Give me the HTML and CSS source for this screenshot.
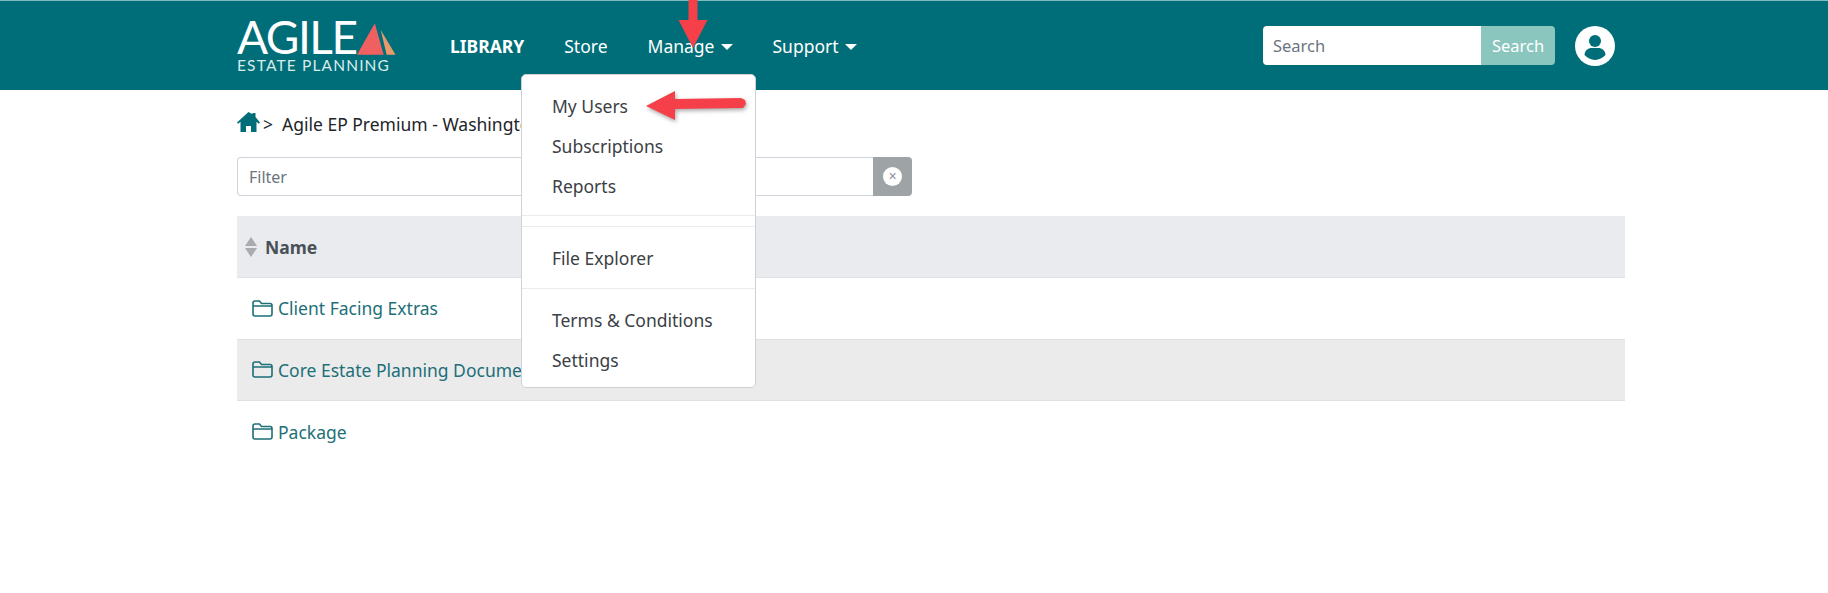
FILE: index.html
```html
<!DOCTYPE html>
<html lang="en">
<head>
    <meta charset="UTF-8">
    <meta name="viewport" content="width=device-width, initial-scale=1.0">
    <title>Agile Estate Planning - Library</title>
    <link rel="stylesheet" href="styles.css">
</head>
<body>
    <header class="navbar">
        <a class="brand">
            <span class="brand-top">
                <span class="brand-name">AGILE</span>
                <svg class="brand-sail" width="40" height="34" viewBox="0 0 40 34">
                    <polygon points="18,1 0,33 27,33" fill="#f06060"/>
                    <polygon points="24,8 39,33 30,33" fill="#e89a6a"/>
                </svg>
            </span>
            <span class="brand-sub">ESTATE PLANNING</span>
        </a>
        <nav class="nav-links">
            <a class="nav-link active">LIBRARY</a>
            <a class="nav-link store">Store</a>
            <a class="nav-link manage">Manage<span class="caret"></span></a>
            <a class="nav-link">Support<span class="caret"></span></a>
        </nav>
        <form class="search">
            <input class="search-input" type="text" placeholder="Search">
            <button class="search-btn" type="button">Search</button>
        </form>
        <svg class="avatar" width="40" height="40" viewBox="0 0 40 40">
            <circle cx="20" cy="20" r="20" fill="#fff"/>
            <circle cx="20" cy="15" r="6" fill="#006e78"/>
            <path d="M9.500 29c0-4.500 4-7 7-7h7c3 0 7 2.500 7 7-2.800 2.800-6.500 5-10.500 5s-7.700-2.200-10.500-5z" fill="#006e78"/>
        </svg>
    </header>

    <div class="dropdown">
        <a class="dropdown-item first">My Users</a>
        <a class="dropdown-item">Subscriptions</a>
        <a class="dropdown-item">Reports</a>
        <div class="divider double"></div>
        <a class="dropdown-item">File Explorer</a>
        <div class="divider"></div>
        <a class="dropdown-item">Terms &amp; Conditions</a>
        <a class="dropdown-item">Settings</a>
    </div>

    <!-- annotation arrows drawn over the screenshot -->
    <svg class="arrow arrow-down" width="30" height="50" viewBox="0 0 30 50">
        <rect x="10.500" y="0" width="9" height="24" fill="#f5404a"/>
        <polygon points="0.500,20 29.500,20 15,48" fill="#f5404a"/>
    </svg>
    <svg class="arrow arrow-left" width="104" height="34" viewBox="0 0 104 34">
        <polygon points="1,17 30,2 30,10 96,9 100,11 101,15 98,19 30,20 30,31" fill="#f5404a"/>
    </svg>

    <main class="content">
        <div class="breadcrumb">
            <svg class="home-icon" width="23" height="20" viewBox="0 0 23 20">
                <path d="M11.500 0L0 10.500l1.200 1.300L3.500 9.800V20h5.500v-6h5v6h5.500V9.800l2.300 2 1.200-1.300L18.500 5V1h-3v1.300z" fill="#006e78"/>
            </svg>
            <span class="crumb-sep">&gt;</span>
            <span class="crumb-text">Agile EP Premium - Washington</span>
        </div>

        <div class="filter">
            <input class="filter-input" type="text" placeholder="Filter">
            <button class="filter-clear" type="button"><span class="clear-dot">×</span></button>
        </div>

        <div class="table">
            <div class="table-head">
                <span class="sort-icon">
                    <span class="sort-up"></span>
                    <span class="sort-down"></span>
                </span>
                Name
            </div>
            <div class="table-row">
                <svg class="folder" width="21" height="17" viewBox="0 0 21 17"><path d="M1 14V3c0-1 .8-2 2-2h4.500l2 2.500H18c1.200 0 2 1 2 2V14c0 1-.8 2-2 2H3c-1.200 0-2-1-2-2zM1 6h19" fill="none" stroke="#1d6f78" stroke-width="1.600"/></svg>
                <a class="row-link">Client Facing Extras</a>
            </div>
            <div class="table-row striped">
                <svg class="folder" width="21" height="17" viewBox="0 0 21 17"><path d="M1 14V3c0-1 .8-2 2-2h4.500l2 2.500H18c1.200 0 2 1 2 2V14c0 1-.8 2-2 2H3c-1.200 0-2-1-2-2zM1 6h19" fill="none" stroke="#1d6f78" stroke-width="1.600"/></svg>
                <a class="row-link">Core Estate Planning Documents</a>
            </div>
            <div class="table-row">
                <svg class="folder" width="21" height="17" viewBox="0 0 21 17"><path d="M1 14V3c0-1 .8-2 2-2h4.500l2 2.500H18c1.200 0 2 1 2 2V14c0 1-.8 2-2 2H3c-1.200 0-2-1-2-2zM1 6h19" fill="none" stroke="#1d6f78" stroke-width="1.600"/></svg>
                <a class="row-link">Package</a>
            </div>
        </div>
    </main>
</body>
</html>
```

FILE: styles.css
```css
:root {
    --teal: #006e78;
    --text-color: #343a40;
    --link-color: #1d6f78;
}

* {
    margin: 0;
    padding: 0;
    box-sizing: border-box;
}

body {
    font-family: "Noto Sans", "Open Sans", sans-serif;
    font-size: 17px;
    color: var(--text-color);
    background-color: #fff;
    min-height: 593px;
    overflow: hidden;
}

.navbar {
    display: flex;
    align-items: center;
    height: 90px;
    padding: 0 213px 0 237px;
    background-color: var(--teal);
    border-top: 1px solid #7fbcc0;
    color: #fff;
}

.brand {
    display: flex;
    flex-direction: column;
    width: 160px;
    color: #fff;
}

.brand-top {
    display: flex;
    align-items: flex-end;
    height: 38px;
}

.brand-name {
    font-family: "Lato", sans-serif;
    font-size: 46px;
    line-height: 38px;
    letter-spacing: -1.500px;
}

.brand-sail {
    margin-left: 1px;
}

.brand-sub {
    font-family: "Lato", sans-serif;
    font-size: 15.500px;
    line-height: 18px;
    letter-spacing: 1.150px;
    white-space: nowrap;
    color: #d9ecec;
}

.nav-links {
    display: flex;
    align-items: center;
    margin-left: 53px;
    gap: 40px;
}

.nav-link {
    font-size: 17.500px;
    color: #fff;
    white-space: nowrap;
}

.nav-link.active {
    font-weight: 700;
}

.caret {
    display: inline-block;
    margin-left: 6px;
    vertical-align: 3px;
    border-top: 6px solid #fff;
    border-left: 6px solid transparent;
    border-right: 6px solid transparent;
}

.search {
    display: flex;
    width: 292px;
    height: 39px;
    margin-left: auto;
}

.search-input {
    flex: 1;
    min-width: 0;
    padding: 0 10px;
    font: inherit;
    font-size: 16.500px;
    border: none;
    border-radius: 4px 0 0 4px;
}

.search-input::placeholder,
.filter-input::placeholder {
    color: #6c757d;
}

.search-btn {
    width: 74px;
    font: inherit;
    font-size: 16.500px;
    color: #fff;
    background-color: #8ac6bd;
    border: none;
    border-radius: 0 4px 4px 0;
}

.avatar {
    margin-left: 20px;
}

.dropdown {
    position: absolute;
    left: 521px;
    top: 74px;
    width: 235px;
    height: 314px;
    padding-top: 11px;
    background-color: #fff;
    border: 1px solid #cfd2d4;
    border-radius: 5px;
}

.dropdown-item {
    display: block;
    height: 40px;
    padding-left: 30px;
    font-size: 17.500px;
    line-height: 40px;
    color: #3b4045;
}

.divider {
    height: 1px;
    margin: 10px 0 11px;
    background-color: #e9ecef;
}

.divider.double {
    height: 12px;
    margin: 9px 0 11px;
    background-color: transparent;
    border-top: 1px solid #e9ecef;
    border-bottom: 1px solid #e9ecef;
}

.arrow {
    position: absolute;
}

.arrow-down {
    left: 678px;
    top: 0;
}

.arrow-left {
    left: 645px;
    top: 89px;
    filter: drop-shadow(1px 2px 2px rgba(0, 0, 0, 0.35));
}

.content {
    padding: 0 203px 0 237px;
}

.breadcrumb {
    display: flex;
    align-items: center;
    height: 67px;
    font-size: 17.500px;
    color: #212529;
}

.home-icon {
    margin-bottom: 3px;
}

.crumb-sep {
    margin: 0 9px 0 3px;
}

.filter {
    display: flex;
    width: 675px;
    height: 39px;
}

.filter-input {
    flex: 1;
    min-width: 0;
    padding: 0 11px;
    font: inherit;
    font-size: 16px;
    border: 1px solid #ced4da;
    border-right: none;
    border-radius: 4px 0 0 4px;
}

.filter-clear {
    display: flex;
    align-items: center;
    justify-content: center;
    width: 39px;
    background-color: #9ea3a5;
    border: none;
    border-radius: 0 4px 4px 0;
}

.clear-dot {
    width: 19px;
    height: 19px;
    font-size: 14px;
    line-height: 19px;
    text-align: center;
    color: #8b9094;
    background-color: #fff;
    border-radius: 50%;
}

.table {
    margin-top: 20px;
}

.table-head {
    display: flex;
    align-items: center;
    height: 62px;
    padding-left: 8px;
    font-size: 17.500px;
    font-weight: 700;
    color: #495057;
    background-color: #e9ebee;
    border-bottom: 1px solid #dee2e6;
}

.sort-icon {
    display: flex;
    flex-direction: column;
    gap: 2px;
    margin-right: 8px;
}

.sort-up,
.sort-down {
    border-left: 6.500px solid transparent;
    border-right: 6.500px solid transparent;
}

.sort-up {
    border-bottom: 9px solid #a8abaf;
}

.sort-down {
    border-top: 9px solid #a8abaf;
}

.table-row {
    display: flex;
    align-items: center;
    height: 61.500px;
    padding-left: 15px;
    border-bottom: 1px solid #dee2e6;
}

.table-row:last-child {
    border-bottom: none;
}

.table-row.striped {
    background-color: #ebebec;
}

.folder {
    margin-right: 5px;
}

.row-link {
    font-size: 17.500px;
    color: var(--link-color);
}
```
